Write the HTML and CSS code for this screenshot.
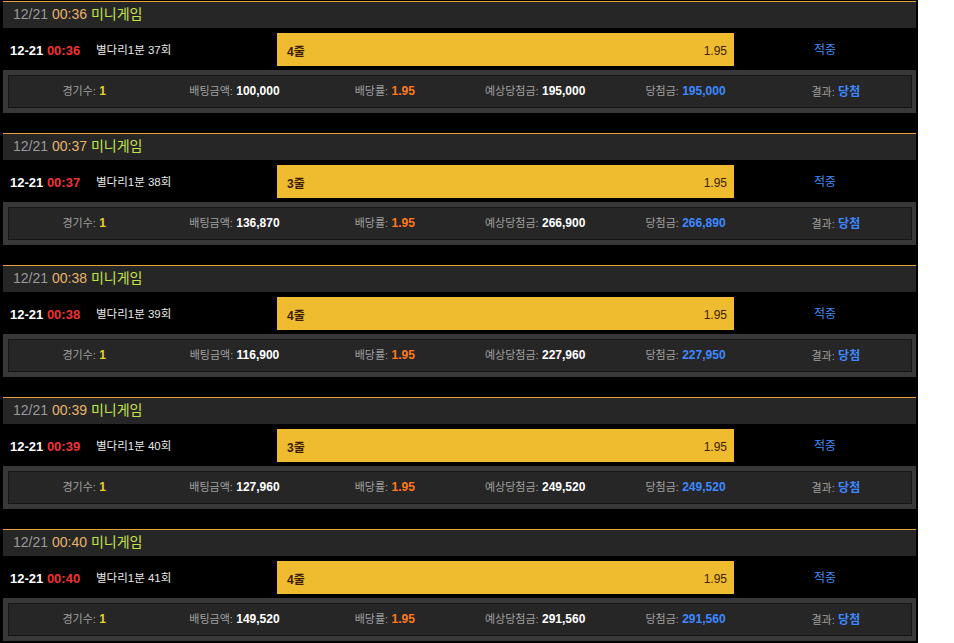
FILE: index.html
```html
<!DOCTYPE html>
<html lang="ko">
<head>
<meta charset="utf-8">
<link rel="stylesheet" href="styles.css">
</head>
<body>
<div class="page">
  <div class="block">
    <div class="head"><span class="hd">12/21</span> <span class="ht">00:36</span> <span class="hg">미니게임</span></div>
    <div class="row">
      <div class="c-date"><span class="d">12-21</span> <span class="t">00:36</span></div>
      <div class="c-game">별다리1분 37회</div>
      <div class="c-bar"><div class="bar"><span class="pick">4줄</span><span class="odd">1.95</span></div></div>
      <div class="c-res">적중</div>
    </div>
    <div class="sum"><div class="sum-in">
      <div class="cell"><span class="lb">경기수:</span> <b class="y">1</b></div>
      <div class="cell"><span class="lb">배팅금액:</span> <b class="w">100,000</b></div>
      <div class="cell"><span class="lb">배당률:</span> <b class="o">1.95</b></div>
      <div class="cell"><span class="lb">예상당첨금:</span> <b class="w">195,000</b></div>
      <div class="cell"><span class="lb">당첨금:</span> <b class="b">195,000</b></div>
      <div class="cell"><span class="lb">결과:</span> <b class="b">당첨</b></div>
    </div></div>
  </div>
  <div class="block">
    <div class="head"><span class="hd">12/21</span> <span class="ht">00:37</span> <span class="hg">미니게임</span></div>
    <div class="row">
      <div class="c-date"><span class="d">12-21</span> <span class="t">00:37</span></div>
      <div class="c-game">별다리1분 38회</div>
      <div class="c-bar"><div class="bar"><span class="pick">3줄</span><span class="odd">1.95</span></div></div>
      <div class="c-res">적중</div>
    </div>
    <div class="sum"><div class="sum-in">
      <div class="cell"><span class="lb">경기수:</span> <b class="y">1</b></div>
      <div class="cell"><span class="lb">배팅금액:</span> <b class="w">136,870</b></div>
      <div class="cell"><span class="lb">배당률:</span> <b class="o">1.95</b></div>
      <div class="cell"><span class="lb">예상당첨금:</span> <b class="w">266,900</b></div>
      <div class="cell"><span class="lb">당첨금:</span> <b class="b">266,890</b></div>
      <div class="cell"><span class="lb">결과:</span> <b class="b">당첨</b></div>
    </div></div>
  </div>
  <div class="block">
    <div class="head"><span class="hd">12/21</span> <span class="ht">00:38</span> <span class="hg">미니게임</span></div>
    <div class="row">
      <div class="c-date"><span class="d">12-21</span> <span class="t">00:38</span></div>
      <div class="c-game">별다리1분 39회</div>
      <div class="c-bar"><div class="bar"><span class="pick">4줄</span><span class="odd">1.95</span></div></div>
      <div class="c-res">적중</div>
    </div>
    <div class="sum"><div class="sum-in">
      <div class="cell"><span class="lb">경기수:</span> <b class="y">1</b></div>
      <div class="cell"><span class="lb">배팅금액:</span> <b class="w">116,900</b></div>
      <div class="cell"><span class="lb">배당률:</span> <b class="o">1.95</b></div>
      <div class="cell"><span class="lb">예상당첨금:</span> <b class="w">227,960</b></div>
      <div class="cell"><span class="lb">당첨금:</span> <b class="b">227,950</b></div>
      <div class="cell"><span class="lb">결과:</span> <b class="b">당첨</b></div>
    </div></div>
  </div>
  <div class="block">
    <div class="head"><span class="hd">12/21</span> <span class="ht">00:39</span> <span class="hg">미니게임</span></div>
    <div class="row">
      <div class="c-date"><span class="d">12-21</span> <span class="t">00:39</span></div>
      <div class="c-game">별다리1분 40회</div>
      <div class="c-bar"><div class="bar"><span class="pick">3줄</span><span class="odd">1.95</span></div></div>
      <div class="c-res">적중</div>
    </div>
    <div class="sum"><div class="sum-in">
      <div class="cell"><span class="lb">경기수:</span> <b class="y">1</b></div>
      <div class="cell"><span class="lb">배팅금액:</span> <b class="w">127,960</b></div>
      <div class="cell"><span class="lb">배당률:</span> <b class="o">1.95</b></div>
      <div class="cell"><span class="lb">예상당첨금:</span> <b class="w">249,520</b></div>
      <div class="cell"><span class="lb">당첨금:</span> <b class="b">249,520</b></div>
      <div class="cell"><span class="lb">결과:</span> <b class="b">당첨</b></div>
    </div></div>
  </div>
  <div class="block">
    <div class="head"><span class="hd">12/21</span> <span class="ht">00:40</span> <span class="hg">미니게임</span></div>
    <div class="row">
      <div class="c-date"><span class="d">12-21</span> <span class="t">00:40</span></div>
      <div class="c-game">별다리1분 41회</div>
      <div class="c-bar"><div class="bar"><span class="pick">4줄</span><span class="odd">1.95</span></div></div>
      <div class="c-res">적중</div>
    </div>
    <div class="sum"><div class="sum-in">
      <div class="cell"><span class="lb">경기수:</span> <b class="y">1</b></div>
      <div class="cell"><span class="lb">배팅금액:</span> <b class="w">149,520</b></div>
      <div class="cell"><span class="lb">배당률:</span> <b class="o">1.95</b></div>
      <div class="cell"><span class="lb">예상당첨금:</span> <b class="w">291,560</b></div>
      <div class="cell"><span class="lb">당첨금:</span> <b class="b">291,560</b></div>
      <div class="cell"><span class="lb">결과:</span> <b class="b">당첨</b></div>
    </div></div>
  </div>
</div>
</body>
</html>
```

FILE: styles.css
```css
html, body {
  margin: 0;
  padding: 0;
  background: #fff;
}
body {
  font-family: "Liberation Sans", "Noto Sans CJK KR", sans-serif;
  font-size: 12px;
}
.page {
  width: 918px;
  height: 643px;
  background: #000;
  padding-top: 1px;
  box-sizing: border-box;
  overflow: hidden;
}
.block {
  margin: 0 2px 20px 3px;
  width: 913px;
}
.head {
  border-top: 1px solid #e6a03a;
  background: #262626;
  height: 26px;
  line-height: 24px;
  padding-left: 10px;
  font-size: 14px;
  white-space: nowrap;
}
.hd { color: #9a9a9a; }
.ht { color: #e8b46c; }
.hg { color: #c2e34a; }
.row {
  display: grid;
  grid-template-columns: 92px 182px 457px 1fr;
  height: 42px;
  align-items: stretch;
}
.c-date {
  padding-left: 7px;
  padding-top: 3px;
  line-height: 39px;
  font-size: 13px;
  font-weight: bold;
  white-space: nowrap;
}
.d { color: #fff; }
.t { color: #f23232; }
.c-game {
  color: #e8e8e8;
  padding-top: 3px;
  line-height: 39px;
  padding-left: 1px;
  font-size: 11.5px;
  white-space: nowrap;
}
.c-bar {
  padding-top: 5px;
}
.bar {
  height: 33px;
  background: #efbc2f;
  display: flex;
  justify-content: space-between;
  align-items: center;
  padding: 2px 7px 0 10px;
  box-sizing: border-box;
  color: #3b1d00;
}
.pick { font-weight: bold; }
.c-res {
  color: #3d8cf5;
  text-align: center;
  padding-top: 3px;
  line-height: 39px;
}
.sum {
  background: #383838;
  padding: 5px 4px 5px 5px;
}
.sum-in {
  background: #262626;
  border: 1px solid #161616;
  height: 31px;
  display: grid;
  grid-template-columns: repeat(6, 1fr);
  align-items: center;
}
.cell {
  text-align: center;
  white-space: nowrap;
  font-size: 12px;
  padding-bottom: 3px;
}
.lb { color: #a0a0a0; font-size: 11px; }
.y { color: #e6d21e; }
.w { color: #fff; }
.o { color: #ff7a18; }
.b { color: #3f88ff; }
```
